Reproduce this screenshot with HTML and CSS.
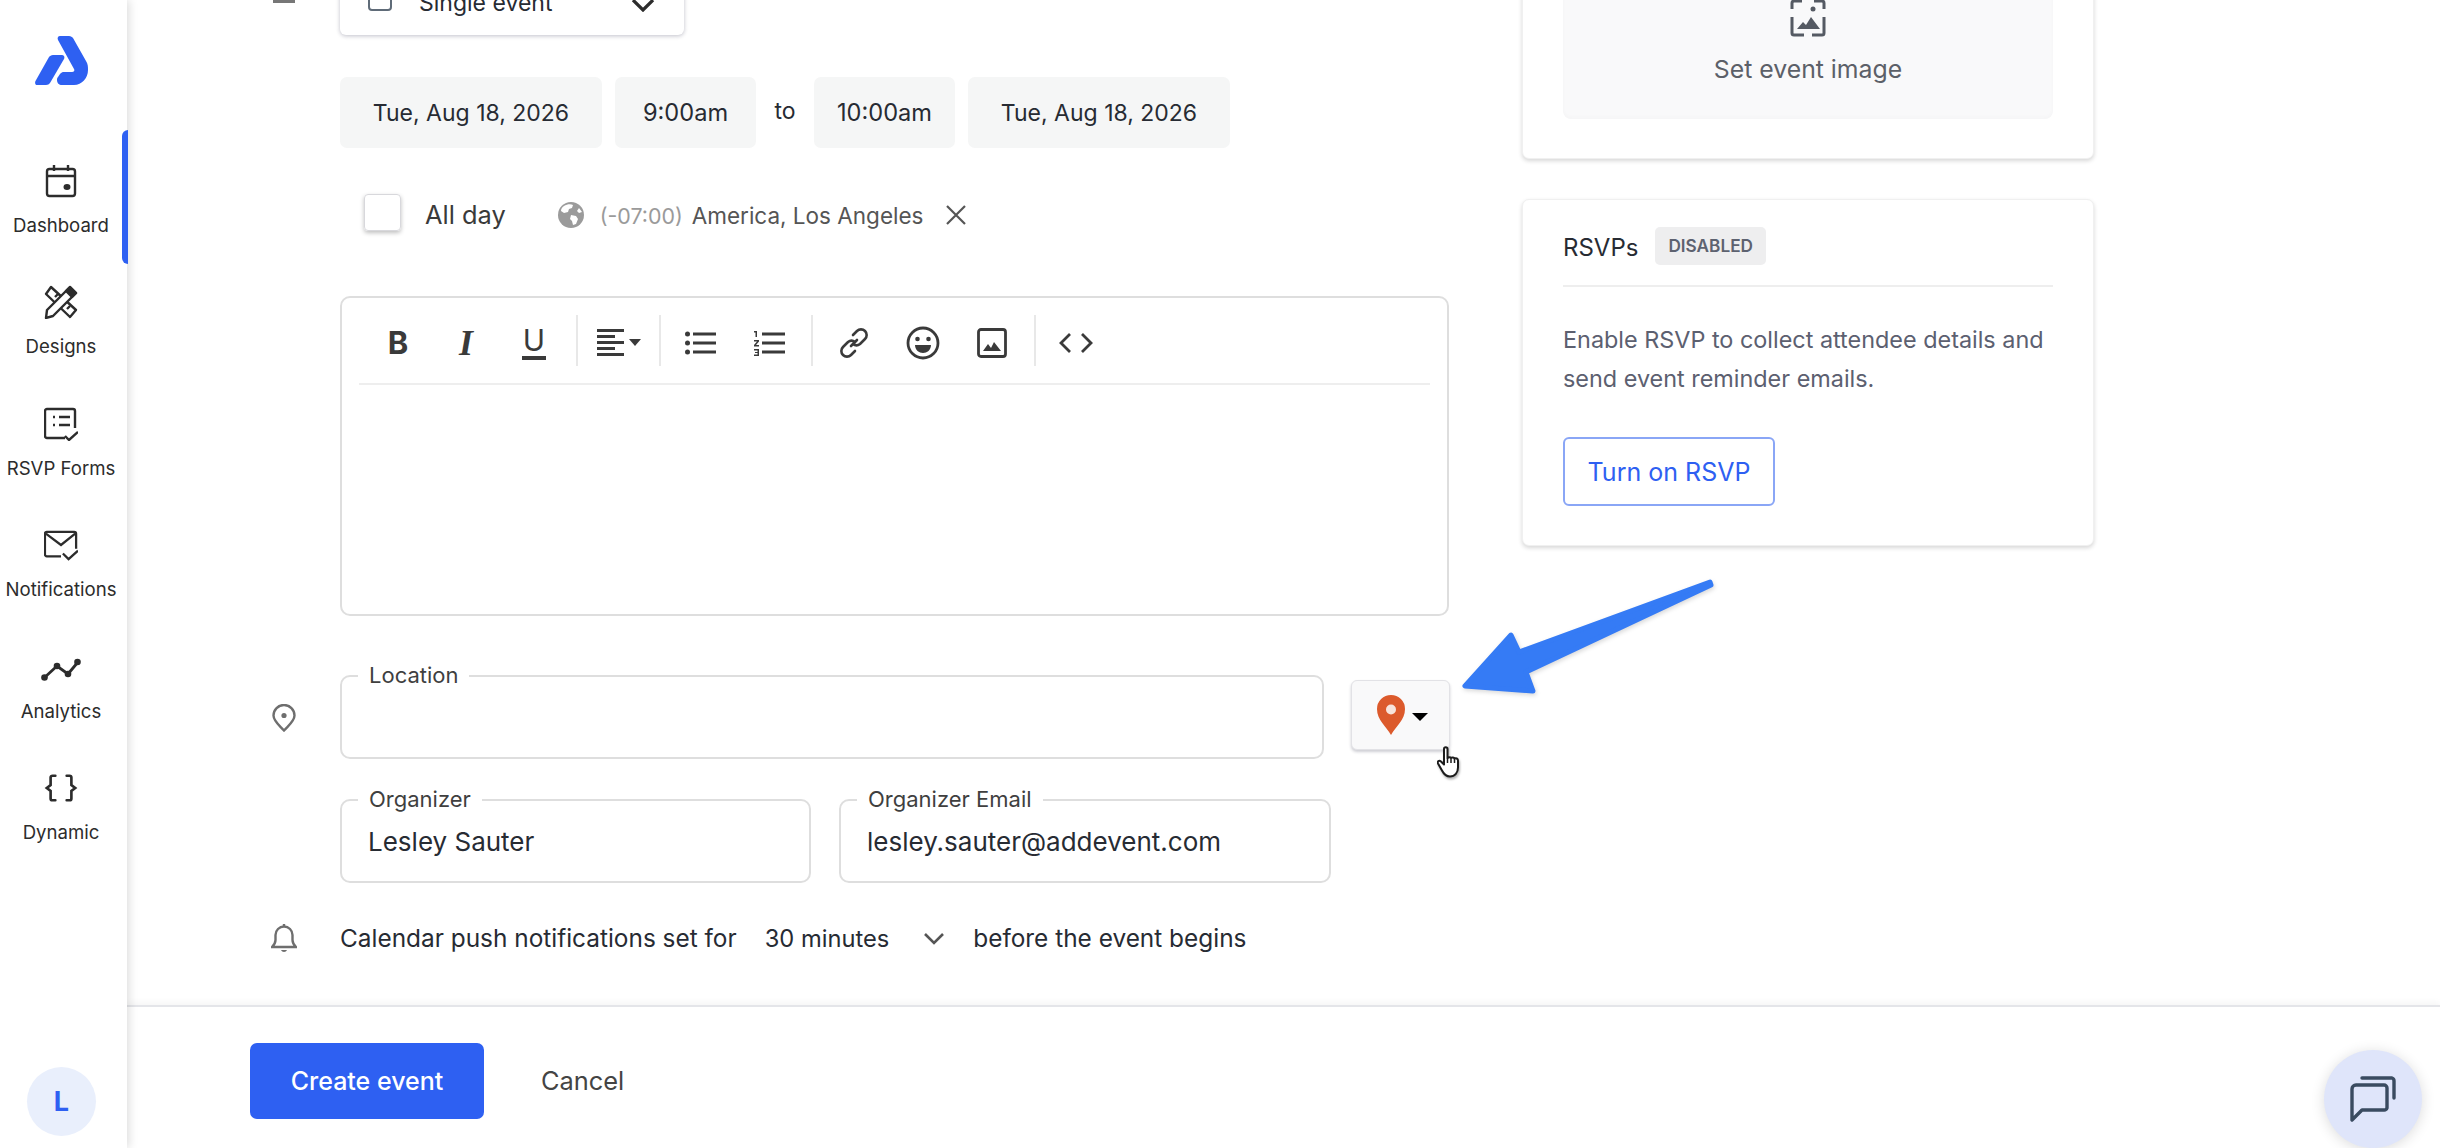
FILE: index.html
```html
<!DOCTYPE html>
<html lang="en">
<head>
  <meta charset="UTF-8" />
  <title>Create event</title>
  <link rel="stylesheet" href="styles.css">
</head>
<body>
  <div class="app">
    <!-- Sidebar -->
    <aside class="sidebar">
      <svg class="logo" viewBox="35 36 53 49" width="53" height="49">
        <path fill="#2e60f2" d="M37 85h9c2 0 3-1 4-2l14-24c1-2 0-4-2-4H53c-2 0-3 1-4 2L35.500 81c-1 2 0 4 1.500 4z"/>
        <path fill="#2e60f2" d="M60 36h9c2 0 3 1 4 2l13 23c2 3 2 6 2 9 0 8-6 15-14 15H62c-3 0-5-2-5-5 0-1 0-2 1-3l2-3c1-1 2-2 3-2h9c2 0 3-2 2-3L58 40c-1-2 0-4 2-4z"/>
      </svg>
      <nav class="nav">
        <a class="nav__item nav__item--active">
          <svg class="nav__icon" viewBox="0 0 34 34" fill="none" stroke="#2c2c2c" stroke-width="2.400">
            <rect x="3" y="5" width="28" height="27" rx="2.500"/>
            <path d="M3 12h28M10 1v6M24 1v6"/>
            <ellipse cx="23" cy="23" rx="3.500" ry="3" fill="#2c2c2c" stroke="none"/>
          </svg>
          <span>Dashboard</span>
        </a>
        <a class="nav__item">
          <svg class="nav__icon" viewBox="0 0 34 34" fill="none" stroke="#2c2c2c" stroke-width="2.400" stroke-linejoin="round">
            <path d="M7 2 32 25l-6 7L2 9z"/>
            <path d="M11 12l3-3M17 18l3-3M23 24l3-3"/>
            <path d="M26 2l6 6L9 31l-7 2 1-8z" fill="#fff"/>
            <path d="M26 2l6 6-4 4-6-6z" fill="#2c2c2c"/>
          </svg>
          <span>Designs</span>
        </a>
        <a class="nav__item">
          <svg class="nav__icon" viewBox="0 0 34 34" fill="none" stroke="#2c2c2c" stroke-width="2.400">
            <path d="M21 31H3a2 2 0 0 1-2-2V4a2 2 0 0 1 2-2h26a2 2 0 0 1 2 2v17"/>
            <path d="M9 10h2M9 18h2M15 10h11M15 18h11"/>
            <path d="M21 29l4 4 9-8"/>
          </svg>
          <span>RSVP Forms</span>
        </a>
        <a class="nav__item">
          <svg class="nav__icon" viewBox="0 0 36 34" fill="none" stroke="#2c2c2c" stroke-width="2.400">
            <path d="M18 29H3a2 2 0 0 1-2-2V5a2 2 0 0 1 2-2h29a2 2 0 0 1 2 2v16"/>
            <path d="M2 5l16 12L33 5"/>
            <path d="M20 26l6 6 10-9"/>
          </svg>
          <span>Notifications</span>
        </a>
        <a class="nav__item">
          <svg class="nav__icon nav__icon--wide" viewBox="0 0 40 34" fill="none" stroke="#2c2c2c" stroke-width="2.800">
            <path d="M3 28l13-12 11 8 10-12"/>
            <g fill="#2c2c2c" stroke="none">
              <circle cx="3.500" cy="27.500" r="3.300"/><circle cx="16" cy="16" r="3.300"/>
              <circle cx="27" cy="24" r="3.300"/><circle cx="36.500" cy="12" r="3.300"/>
            </g>
          </svg>
          <span>Analytics</span>
        </a>
        <a class="nav__item">
          <svg class="nav__icon" viewBox="0 0 36 34" fill="none" stroke="#2c2c2c" stroke-width="2.800" stroke-linecap="round">
            <path d="M12 4H9a2 2 0 0 0-2 2v8l-4 3 4 3v8a2 2 0 0 0 2 2h3"/>
            <path d="M24 4h3a2 2 0 0 1 2 2v8l4 3-4 3v8a2 2 0 0 1-2 2h-3"/>
          </svg>
          <span>Dynamic</span>
        </a>
      </nav>
      <div class="avatar">L</div>
    </aside>

    <main class="main">
      <div class="content">
        <!-- Event form -->
        <section class="form">
          <div class="row row--first">
            <div class="row__icon"><span class="dash"></span></div>
            <div class="select">
              <svg class="select__cal" viewBox="0 0 24 50" width="24" height="50" fill="none" stroke="#5f6b78" stroke-width="2">
                <rect x="1" y="2" width="22" height="45" rx="3"/>
                <circle cx="8" cy="35" r="1.500" fill="#5f6b78" stroke="none"/>
              </svg>
              <span class="select__text">Single event</span>
              <svg class="select__chev" viewBox="0 0 24 14" width="24" height="14" fill="none" stroke="#2c2c2c" stroke-width="3.200">
                <path d="M2 2l10 10L22 2"/>
              </svg>
            </div>
          </div>

          <div class="dates">
            <div class="chip chip--date">Tue, Aug 18, 2026</div>
            <div class="chip chip--time">9:00am</div>
            <div class="dates__to">to</div>
            <div class="chip chip--time">10:00am</div>
            <div class="chip chip--date">Tue, Aug 18, 2026</div>
          </div>

          <div class="allday">
            <span class="checkbox"></span>
            <span class="allday__label">All day</span>
            <svg class="globe" viewBox="0 0 26 26" width="26" height="26">
              <circle cx="13" cy="13" r="13" fill="#9b9b9b"/>
              <path fill="#fff" d="M6 4c3-2 7-2 9-1l-1 3-3 1-1 3-4 1-3-2c0-2 1-4 3-5zM13 13l5 1 2 3-2 5-3 1-1-4-2-2zM21 6l3 4-3 1-2-2z"/>
            </svg>
            <span class="allday__offset">(-07:00)</span>
            <span class="allday__zone">America, Los Angeles</span>
            <svg class="allday__close" viewBox="0 0 22 22" width="22" height="22" stroke="#555" stroke-width="2.200">
              <path d="M2 2l18 18M20 2L2 20"/>
            </svg>
          </div>

          <!-- Rich text editor -->
          <div class="editor">
            <div class="toolbar">
              <div class="tb-btn tb-btn--bold">B</div>
              <div class="tb-btn tb-btn--italic">I</div>
              <div class="tb-btn"><span class="tb-under">U</span></div>
              <span class="tb-sep"></span>
              <div class="tb-btn tb-btn--align">
                <svg viewBox="0 0 28 27" width="28" height="27" fill="#3a3a3a">
                  <path d="M0 0h27v3H0zM0 6h18v3H0zM0 12h27v3H0zM0 18h18v3H0zM0 24h27v3H0z"/>
                </svg>
                <span class="tb-caret"></span>
              </div>
              <span class="tb-sep"></span>
              <div class="tb-btn">
                <svg viewBox="0 0 32 24" width="32" height="24" fill="#3a3a3a">
                  <circle cx="2.500" cy="3" r="2.500"/><circle cx="2.500" cy="12" r="2.500"/><circle cx="2.500" cy="21" r="2.500"/>
                  <path d="M8 1.500h23v3H8zM8 10.500h23v3H8zM8 19.500h23v3H8z"/>
                </svg>
              </div>
              <div class="tb-btn">
                <svg viewBox="0 0 32 26" width="32" height="26" fill="#3a3a3a">
                  <path d="M1 1h3v6H2.500V2.500H1zM1 10h5v1.500L3 15h3v1.500H1V15l3-3.500H1zM1 19h5v7H1v-1.500h3.500v-1.500H2v-1h2.500v-1.500H1z"/>
                  <path d="M9 2.500h23v3H9zM9 11.500h23v3H9zM9 20.500h23v3H9z"/>
                </svg>
              </div>
              <span class="tb-sep"></span>
              <div class="tb-btn tb-btn--wide">
                <svg viewBox="0 0 30 30" width="30" height="30" fill="none" stroke="#3a3a3a" stroke-width="2.600" stroke-linecap="round">
                  <path d="M12 18l6-6"/>
                  <path d="M14 7l4-4a5.500 5.500 0 0 1 8 8l-5 5a5.500 5.500 0 0 1-7 0"/>
                  <path d="M16 23l-4 4a5.500 5.500 0 0 1-8-8l5-5a5.500 5.500 0 0 1 7 0"/>
                </svg>
              </div>
              <div class="tb-btn tb-btn--wide">
                <svg viewBox="0 0 34 34" width="34" height="34" fill="none" stroke="#3a3a3a" stroke-width="2.800">
                  <circle cx="17" cy="17" r="15"/>
                  <circle cx="11.500" cy="13" r="2.300" fill="#3a3a3a" stroke="none"/>
                  <circle cx="22.500" cy="13" r="2.300" fill="#3a3a3a" stroke="none"/>
                  <path d="M9 19h16c0 5-4 8-8 8s-8-3-8-8z" fill="#3a3a3a" stroke="none"/>
                </svg>
              </div>
              <div class="tb-btn tb-btn--wide">
                <svg viewBox="0 0 30 30" width="30" height="30" fill="none" stroke="#3a3a3a" stroke-width="2.800">
                  <rect x="1.500" y="1.500" width="27" height="27" rx="2.500"/>
                  <path d="M6 23l5-7 3 4 3-6 7 9z" fill="#3a3a3a" stroke="none"/>
                </svg>
              </div>
              <span class="tb-sep"></span>
              <div class="tb-btn">
                <svg viewBox="0 0 34 22" width="34" height="22" fill="none" stroke="#3a3a3a" stroke-width="2.800">
                  <path d="M11 2L2 11l9 9M23 2l9 9-9 9"/>
                </svg>
              </div>
            </div>
          </div>

          <div class="row row--location">
            <div class="row__icon row__icon--pin">
              <svg viewBox="0 0 24 28" width="24" height="28" fill="none" stroke="#6e6e6e" stroke-width="2.400">
                <path d="M12 26.500C7 21 1.500 17 1.500 11.500a10.500 10.500 0 0 1 21 0C22.500 17 17 21 12 26.500z"/>
                <circle cx="12" cy="11.500" r="2.600" fill="#6e6e6e" stroke="none"/>
              </svg>
            </div>
            <fieldset class="field field--location">
              <legend>Location</legend>
            </fieldset>
            <div class="map-btn">
              <svg viewBox="0 0 28 40" width="28" height="40">
                <path fill="#dc5a2c" d="M14 40C9 31 0 25 0 14a14 14 0 0 1 28 0C28 25 19 31 14 40z"/>
                <circle cx="14" cy="14.500" r="5" fill="#f7e4dc"/>
              </svg>
              <span class="map-btn__caret"></span>
            </div>
          </div>

          <div class="row row--people">
            <fieldset class="field field--organizer">
              <legend>Organizer</legend>
              <div class="field__value">Lesley Sauter</div>
            </fieldset>
            <fieldset class="field field--email">
              <legend>Organizer Email</legend>
              <div class="field__value">lesley.sauter@addevent.com</div>
            </fieldset>
          </div>

          <div class="row row--notify">
            <div class="row__icon">
              <svg viewBox="0 0 26 30" width="26" height="30" fill="none" stroke="#6e6e6e" stroke-width="2.400">
                <path d="M1 24h24c-2-2-3.500-4-3.500-7v-5a8.500 8.500 0 0 0-17 0v5c0 3-1.500 5-3.500 7z"/>
                <path d="M13 1v3" />
                <path d="M10 27c1 2.500 5 2.500 6 0z" fill="#6e6e6e" stroke="none"/>
              </svg>
            </div>
            <span class="notify__text">Calendar push notifications set for</span>
            <span class="notify__value">30 minutes</span>
            <svg class="notify__chev" viewBox="0 0 22 13" width="22" height="13" fill="none" stroke="#555" stroke-width="2.600">
              <path d="M2 2l9 9 9-9"/>
            </svg>
            <span class="notify__text">before the event begins</span>
          </div>
        </section>

        <!-- Right column -->
        <section class="side">
          <div class="card card--image">
            <div class="placeholder">
              <svg viewBox="0 0 36 38" width="36" height="38" fill="none" stroke="#555a63" stroke-width="3">
                <path d="M2 10V4a2 2 0 0 1 2-2h8M24 2h8a2 2 0 0 1 2 2v6M2 18v16a2 2 0 0 0 2 2h10M22 36h10a2 2 0 0 0 2-2V18"/>
                <circle cx="23" cy="10" r="2.500" fill="#555a63" stroke="none"/>
                <path d="M7 30l6-7 3 3 5-8 9 12z" fill="#555a63" stroke="none"/>
              </svg>
              <span>Set event image</span>
            </div>
          </div>
          <div class="card card--rsvp">
            <div class="card__head">
              <span class="card__title">RSVPs</span>
              <span class="badge">DISABLED</span>
            </div>
            <p class="card__text">Enable RSVP to collect attendee details and send event reminder emails.</p>
            <div class="btn-outline">Turn on RSVP</div>
          </div>
        </section>
      </div>

      <footer class="footer">
        <div class="btn-primary">Create event</div>
        <div class="btn-link">Cancel</div>
      </footer>
    </main>
  </div>

  <!-- Annotation over the screenshot -->
  <svg class="arrow" viewBox="1455 575 265 125" width="265" height="125">
    <path fill="#357bf5" stroke="#357bf5" stroke-width="5" stroke-linejoin="round"
      d="M1710 582 1519 652 1511 635 1465 686 1533 691 1526 672 1711 585z"/>
  </svg>
  <svg class="hand" viewBox="0 0 24 32" width="24" height="32">
    <path fill="#fff" stroke="#1c1c1c" stroke-width="2" stroke-linejoin="round"
      d="M7 3c0-2.500 3.500-2.500 3.500 0v9c1-1 3-1 3.500 0 1-.8 3-.7 3.500.5 1.500-.7 3.500 0 3.500 2v7c0 5-3 9-8 9-4 0-6-2-8-6l-4-7c-1-2 1-3.500 3-2l3 3z"/>
    <path d="M10.500 12v5M14 12.500v4.500M17.500 13v4" stroke="#1c1c1c" stroke-width="1.500"/>
  </svg>
  <div class="chat">
    <svg viewBox="0 0 46 46" width="46" height="46" fill="none" stroke="#3a4b60" stroke-width="3.400" stroke-linecap="round" stroke-linejoin="round">
      <path d="M12 2h30a3 3 0 0 1 2 3v17"/>
      <path d="M2 44V13a4 4 0 0 1 4-4h28a3 3 0 0 1 3 3v20a3 3 0 0 1-3 2H12z"/>
    </svg>
  </div>
</body>
</html>
```

FILE: styles.css
```css
* {
  box-sizing: border-box;
  margin: 0;
  padding: 0;
}

html,
body {
  height: 100%;
  overflow: hidden;
}

body {
  position: relative;
  font-family: Inter, "Noto Sans", sans-serif;
  font-size: 23px;
  color: #272b33;
  background-color: #fff;
}

.app {
  display: flex;
  height: 100%;
}

/* Sidebar */
.sidebar {
  position: relative;
  z-index: 2;
  flex: 0 0 127px;
  display: flex;
  flex-direction: column;
  align-items: center;
  background-color: #fff;
  box-shadow: 2px 0 9px rgba(0, 0, 0, 0.14);
}

.logo {
  margin: 36px 4px 0 0;
  flex: none;
}

.nav {
  display: flex;
  flex-direction: column;
  align-items: center;
  width: 100%;
  margin-top: 79px;
  padding-right: 5px;
  gap: 48.4px;
}

.nav__item {
  position: relative;
  display: flex;
  flex-direction: column;
  align-items: center;
  width: 100%;
  font-size: 18.6px;
  line-height: 24px;
  color: #2c2c2c;
  white-space: nowrap;
}

.nav__icon {
  width: 34px;
  height: 34px;
  margin-bottom: 15px;
}

.nav__icon--wide {
  width: 40px;
}

.nav__item--active::after {
  content: "";
  position: absolute;
  top: -34px;
  right: -6px;
  width: 6px;
  height: 134px;
  background-color: #2e60f2;
  border-radius: 6px 0 0 6px;
}

.avatar {
  display: flex;
  align-items: center;
  justify-content: center;
  width: 69px;
  height: 69px;
  margin: auto 4px 12px 0;
  border-radius: 50%;
  background-color: #e9effc;
  color: #2e60f2;
  font-size: 27px;
  font-weight: 700;
}

/* Main area */
.main {
  flex: 1;
  display: flex;
  flex-direction: column;
  min-width: 0;
}

.content {
  flex: 0 0 1005px;
  display: flex;
  overflow: hidden;
}

.form {
  flex: 0 0 1395px;
  padding-left: 139px;
}

.row {
  display: flex;
  align-items: center;
}

.row__icon {
  display: flex;
  justify-content: center;
  flex: 0 0 36px;
  margin-right: 38px;
}

.row--first {
  margin-top: -35px;
}

.dash {
  width: 22px;
  height: 3px;
  margin-top: 3px;
  background-color: #777;
}

.select {
  display: flex;
  align-items: center;
  width: 344px;
  height: 70px;
  padding: 0 28px;
  border-radius: 6px;
  background-color: #fff;
  box-shadow: 0 1px 4px rgba(30, 30, 60, 0.28);
}

.select__cal {
  flex: none;
  margin-top: -24px;
}

.select__text {
  margin-left: 27px;
  padding-top: 6px;
}

.select__chev {
  margin-left: auto;
  margin-top: 10px;
  margin-right: 1px;
}

.dates {
  display: flex;
  align-items: center;
  gap: 13px;
  margin: 42px 0 0 74px;
}

.chip {
  display: flex;
  align-items: center;
  justify-content: center;
  height: 71px;
  border-radius: 7px;
  background-color: #f5f6f6;
}

.chip--date {
  width: 262px;
}

.chip--time {
  width: 141px;
  font-size: 23.6px;
}

.dates__to {
  width: 42px;
  text-align: center;
  margin: -4px -5px 0;
}

.allday {
  display: flex;
  align-items: center;
  margin: 46px 0 0 98px;
  color: #555;
  font-size: 21.4px;
}

.checkbox {
  width: 37px;
  height: 37px;
  border: 1px solid #d8d8dc;
  border-radius: 4px;
  box-shadow: 0 2px 4px rgba(0, 0, 0, 0.25);
}

.allday__label {
  margin-left: 24px;
  padding-top: 4px;
  font-size: 25.4px;
  color: #3a3a3a;
}

.globe {
  margin: 4px 0 0 52px;
}

.allday__offset {
  margin-left: 16px;
  padding-top: 6px;
  color: #9a9a9a;
}

.allday__zone {
  margin-left: 9px;
  padding-top: 6px;
  font-size: 22.5px;
}

.allday__close {
  margin: 4px 0 0 22px;
}

/* Rich text editor */
.editor {
  width: 1109px;
  height: 320px;
  margin: 65px 0 0 74px;
  padding: 0 17px;
  border: 2px solid #dedede;
  border-radius: 10px;
}

.toolbar {
  display: flex;
  align-items: center;
  height: 87px;
  padding: 4px 0 0 5px;
  border-bottom: 2px solid #eee;
}

.tb-btn {
  display: flex;
  align-items: center;
  justify-content: center;
  flex: 0 0 68px;
  color: #3a3a3a;
}

.tb-btn--wide {
  flex-basis: 69px;
}

.tb-btn--align {
  flex-basis: 67px;
  justify-content: flex-start;
  gap: 4px;
  padding-left: 13px;
}

.tb-btn--bold {
  font-size: 31px;
  font-weight: 700;
}

.tb-btn--italic {
  font-family: "Liberation Serif", serif;
  font-size: 36px;
  font-style: italic;
  font-weight: 700;
}

.tb-under {
  font-size: 30px;
  line-height: 30px;
  padding: 0 1px 1px;
  border-bottom: 4px solid #3a3a3a;
}

.tb-caret {
  border-left: 6px solid transparent;
  border-right: 6px solid transparent;
  border-top: 7px solid #3a3a3a;
}

.tb-sep {
  flex: none;
  width: 2px;
  height: 51px;
  margin: -4px 6px 0 8px;
  background-color: #e8e8e8;
}

/* Location and organizer fields */
.row--location {
  align-items: flex-start;
  margin-top: 47px;
}

.row__icon--pin {
  margin-top: 41px;
}

.field {
  border: 2px solid #dedede;
  border-radius: 10px;
  height: 96px;
  padding: 0 26px;
}

.field legend {
  margin-left: -10px;
  padding: 0 11px 2px;
  font-size: 22px;
  line-height: 24px;
  color: #3f3f3f;
}

.field--location {
  width: 984px;
}

.field__value {
  font-size: 26px;
  line-height: 34px;
  margin-top: 12px;
}

.map-btn {
  display: flex;
  align-items: center;
  gap: 7px;
  width: 99px;
  height: 70px;
  margin: 17px 0 0 27px;
  padding-left: 25px;
  border: 1px solid #e2e2e6;
  border-radius: 6px;
  background-color: #f9f9fa;
  box-shadow: 0 2px 3px rgba(30, 30, 60, 0.22);
}

.map-btn__caret {
  margin-top: 4px;
  border-left: 8px solid transparent;
  border-right: 8px solid transparent;
  border-top: 8px solid #000;
}

.row--people {
  gap: 28px;
  margin: 28px 0 0 74px;
}

.field--organizer {
  width: 471px;
}

.field--email {
  width: 492px;
}

.row--notify {
  margin-top: 39px;
  height: 32px;
}

.notify__text {
  font-size: 24.4px;
}

.notify__value {
  margin-left: 28px;
  font-size: 23.7px;
}

.notify__chev {
  margin-left: 34px;
}

.notify__chev + .notify__text {
  margin-left: 28px;
}

/* Right column */
.side {
  flex: 0 0 572px;
  margin-top: -80px;
}

.card {
  padding: 0 40px;
  border-radius: 7px;
  background-color: #fff;
  border: 1px solid #f0f0f0;
  box-shadow: 0 2px 4px rgba(0, 0, 0, 0.16);
}

.card--image {
  padding-top: 40px;
  padding-bottom: 39px;
}

.placeholder {
  display: flex;
  flex-direction: column;
  align-items: center;
  justify-content: flex-end;
  height: 158px;
  gap: 17px;
  padding-bottom: 35px;
  border-radius: 8px;
  background-color: #f9f9fa;
  box-shadow: inset 0 -2px 4px rgba(0, 0, 0, 0.02);
  color: #5c6068;
  font-size: 24.8px;
}

.card--rsvp {
  height: 347px;
  margin-top: 40px;
  padding-top: 27px;
}

.card__head {
  display: flex;
  align-items: center;
  gap: 17px;
  padding-bottom: 20px;
  border-bottom: 2px solid #eee;
}

.card__title {
  font-size: 24px;
  padding-top: 2px;
}

.badge {
  padding: 0 13px;
  height: 38px;
  line-height: 38px;
  border-radius: 5px;
  background-color: #eeeeef;
  color: #5d6270;
  font-size: 17.2px;
  font-weight: 600;
}

.card__text {
  margin-top: 33px;
  font-size: 23.4px;
  line-height: 39px;
  color: #5c6070;
}

.btn-outline {
  display: flex;
  align-items: center;
  justify-content: center;
  width: 212px;
  height: 69px;
  margin-top: 39px;
  border: 2px solid #8aa6f6;
  border-radius: 6px;
  color: #2e60f2;
  font-size: 25px;
}

/* Footer */
.footer {
  flex: 1;
  display: flex;
  align-items: center;
  padding: 6px 0 0 123px;
  border-top: 2px solid #e4e5e9;
  box-shadow: 0 -3px 6px rgba(0, 0, 0, 0.04);
}

.btn-primary {
  display: flex;
  align-items: center;
  justify-content: center;
  width: 234px;
  height: 76px;
  border-radius: 7px;
  background-color: #2e60f2;
  color: #fff;
  font-size: 25px;
  font-weight: 500;
}

.btn-link {
  margin-left: 57px;
  font-size: 25.4px;
  color: #444;
}

/* Overlays */
.arrow {
  position: absolute;
  left: 1455px;
  top: 575px;
  filter: drop-shadow(1px 2px 2px rgba(0, 0, 0, 0.15));
}

.hand {
  position: absolute;
  left: 1437px;
  top: 746px;
  filter: drop-shadow(1px 2px 1px rgba(0, 0, 0, 0.3));
}

.chat {
  position: absolute;
  left: 2324px;
  top: 1050px;
  display: flex;
  align-items: center;
  justify-content: center;
  width: 98px;
  height: 98px;
  border-radius: 50%;
  background-color: #dfe5fa;
  box-shadow: 0 2px 14px rgba(0, 0, 0, 0.14);
}
```
